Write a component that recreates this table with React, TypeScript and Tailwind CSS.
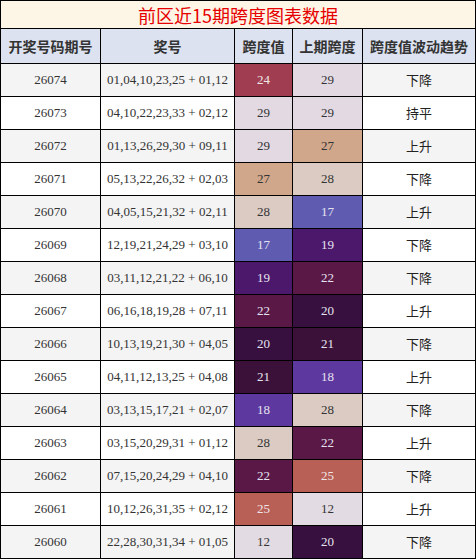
import React from "react";

type Row = [string, string, number, number, string];

const rows: Row[] = [
  ["26074", "01,04,10,23,25 + 01,12", 24, 29, "下降"],
  ["26073", "04,10,22,23,33 + 02,12", 29, 29, "持平"],
  ["26072", "01,13,26,29,30 + 09,11", 29, 27, "上升"],
  ["26071", "05,13,22,26,32 + 02,03", 27, 28, "下降"],
  ["26070", "04,05,15,21,32 + 02,11", 28, 17, "上升"],
  ["26069", "12,19,21,24,29 + 03,10", 17, 19, "下降"],
  ["26068", "03,11,12,21,22 + 06,10", 19, 22, "下降"],
  ["26067", "06,16,18,19,28 + 07,11", 22, 20, "上升"],
  ["26066", "10,13,19,21,30 + 04,05", 20, 21, "下降"],
  ["26065", "04,11,12,13,25 + 04,08", 21, 18, "上升"],
  ["26064", "03,13,15,17,21 + 02,07", 18, 28, "下降"],
  ["26063", "03,15,20,29,31 + 01,12", 28, 22, "上升"],
  ["26062", "07,15,20,24,29 + 04,10", 22, 25, "下降"],
  ["26061", "10,12,26,31,35 + 02,12", 25, 12, "上升"],
  ["26060", "22,28,30,31,34 + 01,05", 12, 20, "下降"],
];

const spanClass: Record<number, string> = {
  12: "bg-[#e3dbe4] text-[#333333]",
  17: "bg-[#5f5bb0] text-[#e6e3f0]",
  18: "bg-[#5d389e] text-[#e6e3f0]",
  19: "bg-[#4c186b] text-[#e6e3f0]",
  20: "bg-[#37103f] text-[#e6e3f0]",
  21: "bg-[#3b1139] text-[#e6e3f0]",
  22: "bg-[#5a1847] text-[#e6e3f0]",
  24: "bg-[#a13d50] text-[#f0e6e8]",
  25: "bg-[#b85f56] text-[#f0e6e8]",
  27: "bg-[#d1a78b] text-[#333333]",
  28: "bg-[#dccbc3] text-[#333333]",
  29: "bg-[#e3d9e3] text-[#333333]",
};

const serif = "font-['Liberation_Serif','Times_New_Roman',serif]";
const cjk = "font-['Noto_Sans_CJK_SC','Noto_Sans',sans-serif]";

export default function App() {
  return (
    <div className="w-[476px] border-l border-t border-black bg-white">
      <div
        className={`h-[28px] border-r border-b border-black bg-[#fdf5e6] flex items-center justify-center text-[18px] leading-none text-[#e60000] ${cjk}`}
      >
        前区近15期跨度图表数据
      </div>
      <div className="grid grid-cols-[100px_134px_58px_70px_113px]">
        {["开奖号码期号", "奖号", "跨度值", "上期跨度", "跨度值波动趋势"].map((h) => (
          <div
            key={h}
            className={`h-[35px] border-r border-b border-black bg-[#dce2f0] flex items-center justify-center text-[14px] font-bold text-[#333333] whitespace-nowrap ${cjk}`}
          >
            {h}
          </div>
        ))}
        {rows.map((r, i) => {
          const bg = i % 2 === 0 ? "bg-[#f4f4f4]" : "bg-white";
          return (
            <React.Fragment key={r[0]}>
              <div
                className={`h-[33px] border-r border-b border-black ${bg} flex items-center justify-center text-[13px] text-[#333333] ${serif}`}
              >
                {r[0]}
              </div>
              <div
                className={`h-[33px] border-r border-b border-black ${bg} flex items-center justify-center text-[13px] text-[#333333] whitespace-pre ${serif}`}
              >
                {r[1]}
              </div>
              <div
                className={`h-[33px] border-r border-b border-black ${spanClass[r[2]]} flex items-center justify-center text-[13px] ${serif}`}
              >
                {r[2]}
              </div>
              <div
                className={`h-[33px] border-r border-b border-black ${spanClass[r[3]]} flex items-center justify-center text-[13px] ${serif}`}
              >
                {r[3]}
              </div>
              <div
                className={`h-[33px] border-r border-b border-black ${bg} flex items-center justify-center text-[13px] text-[#222222] ${cjk}`}
              >
                {r[4]}
              </div>
            </React.Fragment>
          );
        })}
      </div>
    </div>
  );
}
